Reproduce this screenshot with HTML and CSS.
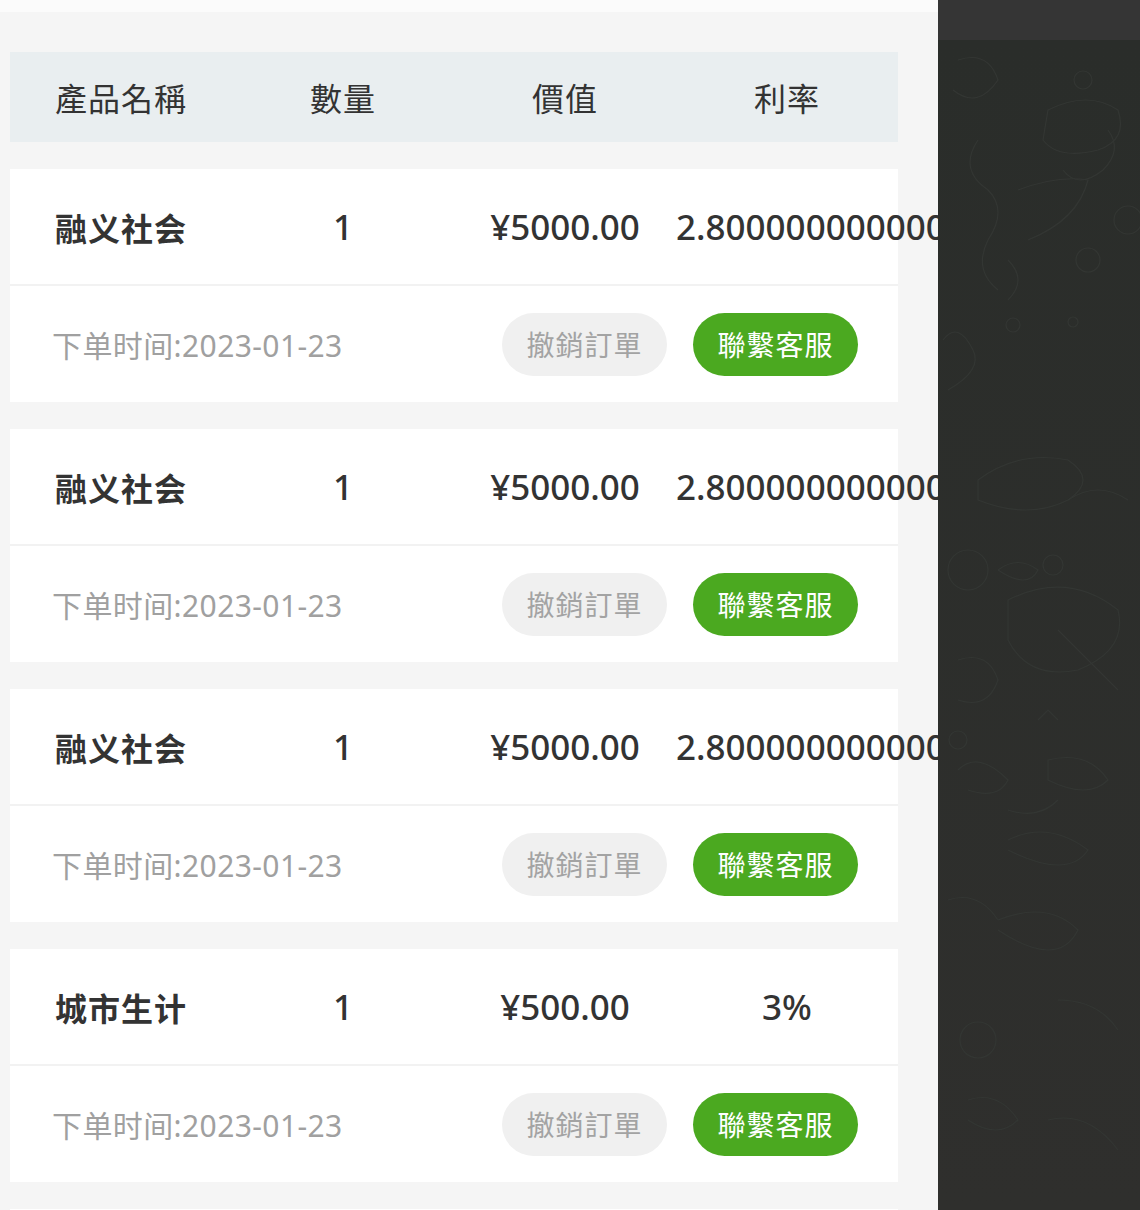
FILE: index.html
```html
<!DOCTYPE html>
<html lang="zh-Hant">
<head>
<meta charset="utf-8">
<title>訂單</title>
<link rel="stylesheet" href="styles.css">
</head>
<body>
<div class="screen">
  <main class="orders">
    <div class="topstrip"></div>
    <div class="list">
      <div class="thead">
        <div class="cell">產品名稱</div>
        <div class="cell">數量</div>
        <div class="cell">價值</div>
        <div class="cell">利率</div>
      </div>

      <div class="card">
        <div class="row-main">
          <div class="cell name">融义社会</div>
          <div class="cell num">1</div>
          <div class="cell num">¥5000.00</div>
          <div class="cell num">2.8000000000000003%</div>
        </div>
        <div class="row-foot">
          <span class="date">下单时间:2023-01-23</span>
          <div class="actions">
            <button class="btn btn-cancel">撤銷訂單</button>
            <button class="btn btn-contact">聯繫客服</button>
          </div>
        </div>
      </div>

      <div class="card">
        <div class="row-main">
          <div class="cell name">融义社会</div>
          <div class="cell num">1</div>
          <div class="cell num">¥5000.00</div>
          <div class="cell num">2.8000000000000003%</div>
        </div>
        <div class="row-foot">
          <span class="date">下单时间:2023-01-23</span>
          <div class="actions">
            <button class="btn btn-cancel">撤銷訂單</button>
            <button class="btn btn-contact">聯繫客服</button>
          </div>
        </div>
      </div>

      <div class="card">
        <div class="row-main">
          <div class="cell name">融义社会</div>
          <div class="cell num">1</div>
          <div class="cell num">¥5000.00</div>
          <div class="cell num">2.8000000000000003%</div>
        </div>
        <div class="row-foot">
          <span class="date">下单时间:2023-01-23</span>
          <div class="actions">
            <button class="btn btn-cancel">撤銷訂單</button>
            <button class="btn btn-contact">聯繫客服</button>
          </div>
        </div>
      </div>

      <div class="card">
        <div class="row-main">
          <div class="cell name">城市生计</div>
          <div class="cell num">1</div>
          <div class="cell num">¥500.00</div>
          <div class="cell num">3%</div>
        </div>
        <div class="row-foot">
          <span class="date">下单时间:2023-01-23</span>
          <div class="actions">
            <button class="btn btn-cancel">撤銷訂單</button>
            <button class="btn btn-contact">聯繫客服</button>
          </div>
        </div>
      </div>

      <div class="card card-peek"></div>
    </div>
  </main>

  <aside class="side">
    <div class="side-top"></div>
    <div class="side-body">
      <svg class="doodles" width="202" height="1170" viewBox="0 0 202 1170" fill="none" stroke="#333633" stroke-width="1.2">
        <path d="M20 20 q30 -10 40 20 q-20 30 -45 10"/>
        <circle cx="145" cy="40" r="9"/>
        <path d="M110 70 q40 -20 70 0 q10 30 -20 40 q-40 10 -55 -10 z"/>
        <path d="M170 90 q15 20 -5 40 q-25 20 -40 0"/>
        <path d="M40 100 q-20 30 10 50 q20 20 0 50 q-15 30 10 50"/>
        <path d="M80 150 q40 -15 70 -10 q-10 40 -60 60"/>
        <circle cx="190" cy="180" r="14"/>
        <circle cx="150" cy="220" r="12"/>
        <path d="M70 220 q20 20 0 40"/>
        <circle cx="75" cy="285" r="7"/>
        <circle cx="135" cy="282" r="5"/>
        <path d="M5 300 q15 -20 30 10 q10 20 -25 40"/>
        <path d="M40 440 q40 -30 90 -20 q30 20 0 40 q-40 20 -90 0 z"/>
        <path d="M130 460 q30 -20 60 0"/>
        <path d="M60 530 q20 -15 40 0 q-10 20 -40 0"/>
        <circle cx="30" cy="530" r="20"/>
        <circle cx="115" cy="525" r="10"/>
        <path d="M70 560 q60 -30 110 10 q10 40 -40 60 q-50 10 -70 -30 z"/>
        <path d="M120 590 l60 60"/>
        <path d="M20 620 q30 -10 40 20 q-10 30 -40 20"/>
        <path d="M100 680 l10 -10 l10 10"/>
        <circle cx="20" cy="700" r="9"/>
        <path d="M20 730 q20 -20 50 10 q-10 20 -40 10"/>
        <path d="M110 720 q40 -10 60 20 q-20 20 -60 0 z"/>
        <path d="M70 770 q30 10 50 -10"/>
        <path d="M70 800 q40 -20 80 10 q-20 30 -80 0"/>
        <path d="M10 860 q30 -10 50 20"/>
        <path d="M60 880 q50 -20 80 10 q-20 40 -80 0"/>
        <circle cx="40" cy="1000" r="18"/>
        <path d="M120 960 q40 0 60 30"/>
        <path d="M30 1060 q30 -10 50 20 q-20 20 -50 0"/>
        <path d="M110 1080 q40 -10 70 30"/>
      </svg>
    </div>
  </aside>
</div>
</body>
</html>
```

FILE: styles.css
```css
* {
  box-sizing: border-box;
}

html, body {
  margin: 0;
  padding: 0;
}

body {
  font-family: "Noto Sans", "Noto Sans CJK TC", "Noto Sans CJK SC", sans-serif;
  color: #333;
  background: #f5f5f5;
}

.screen {
  display: flex;
  width: 1140px;
  height: 1210px;
  overflow: hidden;
}

.orders {
  width: 938px;
  flex: none;
  height: 1210px;
  background: #f5f5f5;
  overflow: hidden;
}

.topstrip {
  height: 12px;
  background: #fbfbfb;
}

.list {
  width: 888px;
  margin: 40px 0 0 10px;
  display: flex;
  flex-direction: column;
  gap: 27px;
}

.thead {
  height: 90px;
  background: #e9eef0;
  display: grid;
  grid-template-columns: repeat(4, 222px);
  align-items: center;
  font-size: 32px;
  letter-spacing: 1px;
  color: #333;
}

.cell {
  text-align: center;
  white-space: nowrap;
}

.card {
  background: #fff;
  height: 233px;
  display: flex;
  flex-direction: column;
}

.card-peek {
  height: 40px;
  flex: none;
}

.row-main {
  height: 117px;
  display: grid;
  grid-template-columns: repeat(4, 222px);
  align-items: center;
  font-size: 32px;
  font-weight: 500;
  color: #333;
  border-bottom: 2px solid #f2f2f2;
}

.row-main .name {
  font-weight: 700;
  letter-spacing: 1px;
}

.row-main .num {
  font-size: 35px;
  line-height: 1.2;
}

.row-foot {
  flex: 1;
  display: flex;
  align-items: center;
  justify-content: space-between;
  padding: 0 40px 0 42px;
}

.date {
  font-size: 30px;
  letter-spacing: 0.4px;
  color: #a0a0a0;
}

.actions {
  display: flex;
  gap: 26px;
}

.btn {
  height: 63px;
  width: 165px;
  border: none;
  border-radius: 32px;
  font-family: "Noto Sans CJK TC", "Noto Sans CJK SC", sans-serif;
  font-size: 28px;
  padding: 0;
  cursor: pointer;
  letter-spacing: 1px;
}

.btn-cancel {
  background: #f0f0f0;
  color: #a3a3a3;
}

.btn-contact {
  background: #4ba920;
  color: #fff;
}

.side {
  flex: 1;
  display: flex;
  flex-direction: column;
  background: #2b2e2b;
}

.side-top {
  height: 40px;
  background: #353535;
}

.side-body {
  flex: 1;
  background: linear-gradient(#2a2d2a, #2f2f2d);
  overflow: hidden;
}

.doodles {
  display: block;
}
```
